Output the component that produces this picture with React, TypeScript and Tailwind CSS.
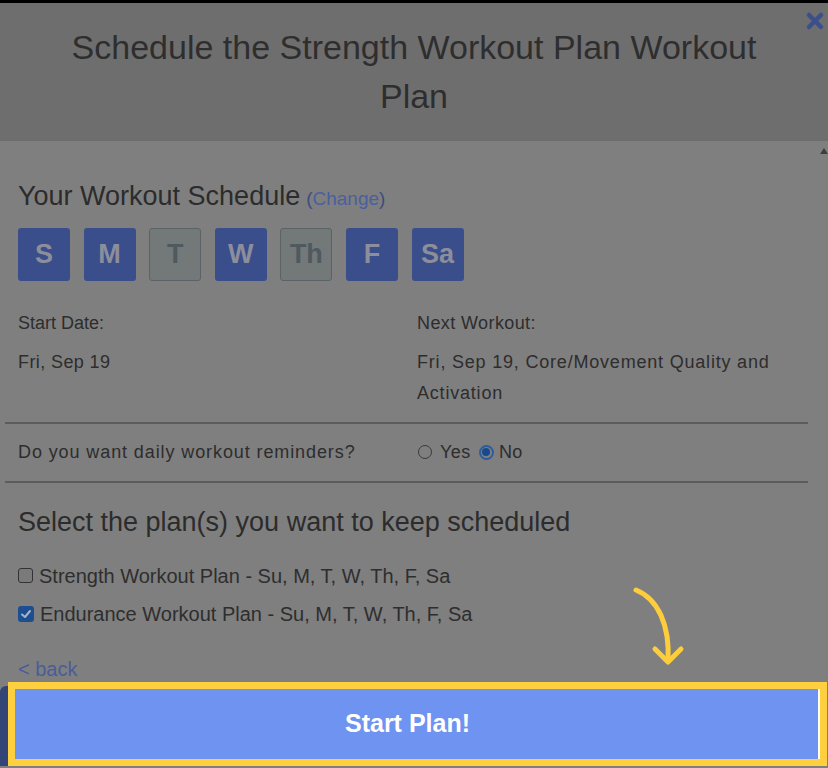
import React from 'react';

const DAYS = [
  { label: 'S', on: true },
  { label: 'M', on: true },
  { label: 'T', on: false },
  { label: 'W', on: true },
  { label: 'Th', on: false },
  { label: 'F', on: true },
  { label: 'Sa', on: true },
];

export default function App() {
  return (
    <div
      className="w-[828px] h-[768px] bg-black pt-[3px] overflow-hidden relative"
      style={{ fontFamily: '"Liberation Sans", Arial, sans-serif' }}
    >
      {/* Header */}
      <div className="h-[138px] bg-[#6e6e6e] relative pt-[20px] px-[56px]">
        <h1 className="text-center text-[34px] leading-[49px] text-[#2e2e2e]">
          Schedule the Strength Workout Plan Workout Plan
        </h1>
        <div className="absolute right-[3px] top-[8px] text-[#3b4f8c]">
          <svg width="20" height="20" viewBox="0 0 20 20">
            <path d="M4 4 L16 16 M16 4 L4 16" stroke="currentColor" strokeWidth="4.5" strokeLinecap="round" />
          </svg>
        </div>
      </div>

      {/* Body */}
      <div className="h-[627px] bg-[#7f7f7f] flex">
        <div className="flex-1 pl-[5px] pr-[7px] pt-[39px]">
          <div className="px-[13px]">
            <div className="flex items-baseline gap-[6px]">
              <span className="text-[27px] leading-[32px] text-[#2c2c2c]">Your Workout Schedule</span>
              <span className="text-[19px] text-[#3d4d7e]">
                (<span className="text-[#4a5f9e]">Change</span>)
              </span>
            </div>
            <div className="flex gap-[13.6px] mt-[14px]">
              {DAYS.map((d) => (
                <div
                  key={d.label}
                  className={
                    d.on
                      ? 'w-[52px] h-[53px] rounded-[3px] bg-[#3a4e8b] flex items-center justify-center text-[27px] font-bold text-[#8c8f9b]'
                      : 'w-[52px] h-[53px] rounded-[3px] bg-[#737878] border border-[#5b6366] flex items-center justify-center text-[27px] font-bold text-[#4e5a5f]'
                  }
                >
                  {d.label}
                </div>
              ))}
            </div>
          </div>

          <div className="px-[13px] mt-[32px] flex text-[18px] tracking-[0.4px] text-[#2d2d2d]">
            <div className="w-[399px]">
              <div className="leading-[20px] tracking-normal">Start Date:</div>
              <div className="leading-[31px] mt-[14px]">Fri, Sep 19</div>
            </div>
            <div className="flex-1">
              <div className="leading-[20px] tracking-[0.4px]">Next Workout:</div>
              <div className="leading-[31px] mt-[14px] tracking-[0.8px]">
                Fri, Sep 19, Core/Movement Quality and
                <br />
                Activation
              </div>
            </div>
          </div>

          <div className="h-[2px] bg-[#5c5c5c] mt-[13px]" />

          <div className="px-[13px] h-[57px] flex items-center text-[18px] text-[#2d2d2d]">
            <div className="w-[399px] tracking-[0.9px]">Do you want daily workout reminders?</div>
            <div className="flex items-center">
              <span className="w-[14px] h-[14px] rounded-full border border-[#3a3a3a] ml-[1px] mr-[8px]" />
              <span className="tracking-[0.5px]">Yes</span>
              <span className="w-[15px] h-[15px] rounded-full border-2 border-[#2d5d99] flex items-center justify-center ml-[8px] mr-[5px]">
                <span className="w-[8px] h-[8px] rounded-full bg-[#164a8c]" />
              </span>
              <span className="tracking-[0.5px]">No</span>
            </div>
          </div>

          <div className="h-[2px] bg-[#5c5c5c]" />

          <div className="px-[13px]">
            <div className="text-[27px] leading-[30px] text-[#2c2c2c] mt-[24px]">
              Select the plan(s) you want to keep scheduled
            </div>
            <div className="mt-[27px] flex items-center gap-[6px] text-[20px] leading-[24px] text-[#2e2e2e]">
              <span className="w-[15px] h-[15px] rounded-[3px] border border-[#333] bg-[#7a7a7a]" />
              <span>Strength Workout Plan - Su, M, T, W, Th, F, Sa</span>
            </div>
            <div className="mt-[14px] flex items-center gap-[6px] text-[20px] leading-[24px] text-[#2e2e2e]">
              <span className="w-[16px] h-[16px] rounded-[3px] bg-[#1d4e90] flex items-center justify-center">
                <svg width="12" height="12" viewBox="0 0 12 12">
                  <path d="M2 6.5 L5 9 L10 3" stroke="#a8b3c4" strokeWidth="2" fill="none" strokeLinecap="round" strokeLinejoin="round" />
                </svg>
              </span>
              <span>Endurance Workout Plan - Su, M, T, W, Th, F, Sa</span>
            </div>
            <div className="mt-[31px] text-[20px] leading-[24px] text-[#4a5d98]">&lt; back</div>
          </div>
        </div>
        <div className="w-[13px] pt-[6px] flex justify-end">
          <svg width="8" height="8" viewBox="0 0 8 8">
            <path d="M0 7 L4 1 L8 7 Z" fill="#3e3e3e" />
          </svg>
        </div>
      </div>

      {/* Start button highlighted */}
      <div className="absolute left-0 top-[686px] w-[12px] h-[80px] bg-[#334477] rounded-tl-[6px]" />
      <div className="absolute left-[8px] top-[682px] w-[819px] h-[84px] bg-[#fed03f] p-[7px]">
        <div className="w-full h-full bg-[#6f93f0] flex items-center justify-center pr-[18px] border-r-[2px] border-white">
          <span className="text-white font-bold text-[25px]">Start Plan!</span>
        </div>
      </div>

      {/* Arrow annotation */}
      <svg className="absolute left-[620px] top-[575px]" width="80" height="100" viewBox="0 0 80 100">
        <path
          d="M16 15 C38 24 50 50 48 86"
          stroke="#fdcd3c"
          strokeWidth="5"
          fill="none"
          strokeLinecap="round"
        />
        <path
          d="M35 74 L48 87 L61 74"
          stroke="#fdcd3c"
          strokeWidth="5"
          fill="none"
          strokeLinecap="round"
          strokeLinejoin="round"
        />
      </svg>
    </div>
  );
}
